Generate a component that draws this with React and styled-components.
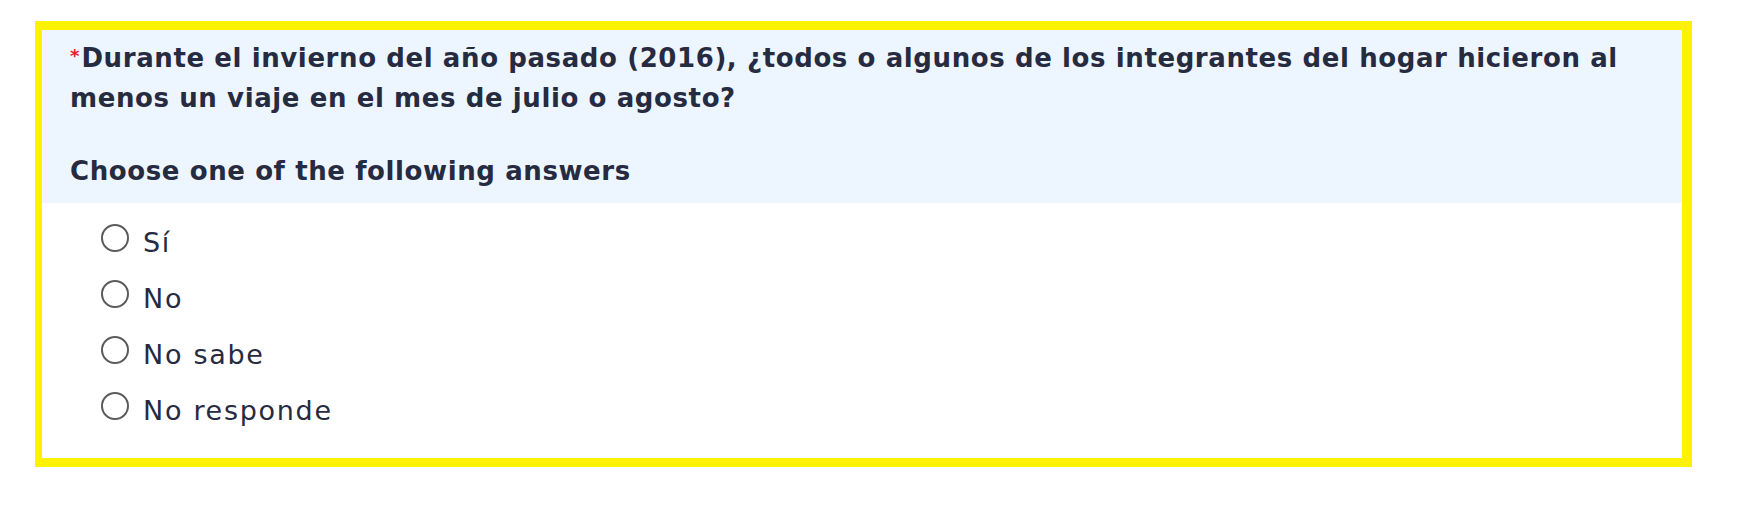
import React from 'react'
import styled, { createGlobalStyle } from 'styled-components'

const GlobalStyle = createGlobalStyle`
  html, body {
    margin: 0;
    padding: 0;
    background: #ffffff;
  }
  body {
    font-family: 'DejaVu Sans', Verdana, sans-serif;
    color: #262b3f;
  }
`

const Page = styled.div`
  padding: 21px 0 0 35px;
`

const QuestionBox = styled.div`
  width: 1657px;
  box-sizing: border-box;
  border: 9px solid #fff200;
  border-left-width: 7px;
  border-right-width: 10px;
  background: #ffffff;
`

const Header = styled.div`
  background: #edf5ff;
  padding: 6px 30px 12px 28px;
`

const QuestionText = styled.div`
  font-weight: bold;
  font-size: 26px;
  letter-spacing: 0.6px;
  line-height: 40px;
`

const Mandatory = styled.span`
  color: #ee1c24;
  font-size: 18px;
  letter-spacing: 0;
  vertical-align: 5px;
  margin-right: 2px;
`

const Help = styled.div`
  font-weight: bold;
  font-size: 26px;
  letter-spacing: 0.6px;
  line-height: 40px;
  margin-top: 33px;
`

const Answers = styled.ul`
  list-style: none;
  margin: 0;
  padding: 21px 0 38px 59px;
  display: flex;
  flex-direction: column;
  gap: 28px;
`

const Option = styled.li`
  display: flex;
  align-items: center;
  gap: 14px;
  height: 28px;
  font-size: 27px;
  letter-spacing: 1.7px;
  cursor: pointer;
`

const Radio = styled.span`
  width: 28px;
  height: 28px;
  box-sizing: border-box;
  border: 2px solid #5b5b5b;
  border-radius: 50%;
  background: #fff;
  flex: none;
`

const Label = styled.span`
  color: #262b3f;
  position: relative;
  top: 4px;
`

const options = ['Sí', 'No', 'No sabe', 'No responde']

export default function App() {
  return (
    <>
      <GlobalStyle />
      <Page>
        <QuestionBox>
          <Header>
            <QuestionText>
              <Mandatory>*</Mandatory>
              Durante el invierno del año pasado (2016), ¿todos o algunos de los integrantes del hogar hicieron al menos un viaje en el mes de julio o agosto?
            </QuestionText>
            <Help>Choose one of the following answers</Help>
          </Header>
          <Answers>
            {options.map((opt) => (
              <Option key={opt}>
                <Radio />
                <Label>{opt}</Label>
              </Option>
            ))}
          </Answers>
        </QuestionBox>
      </Page>
    </>
  )
}
